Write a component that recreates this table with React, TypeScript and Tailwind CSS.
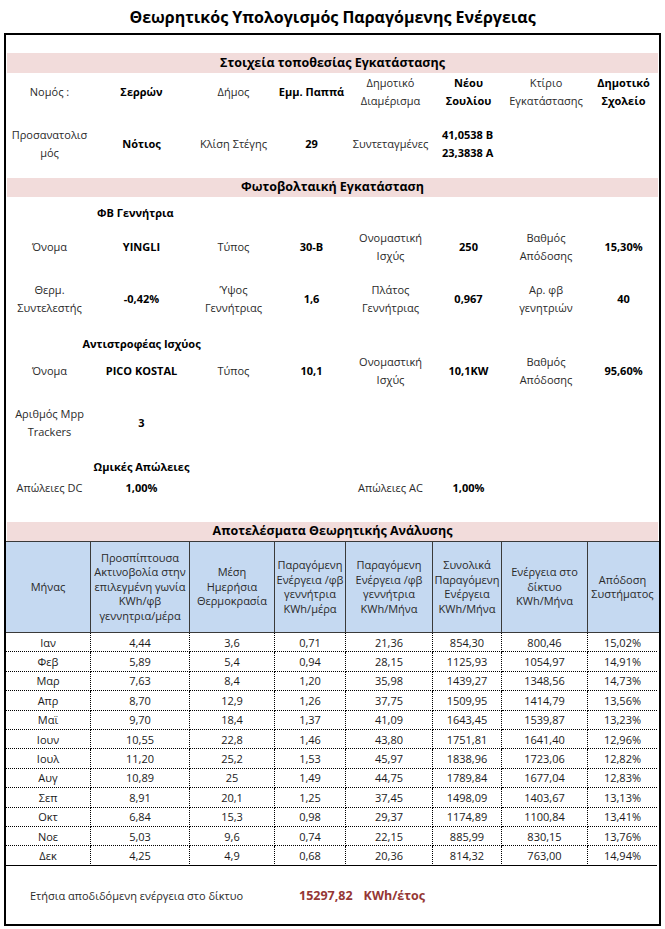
import React from 'react';

const cols = 'grid grid-cols-[85px_99px_85px_71px_87px_69px_86px_69px]';

const months: string[][] = [
  ['Ιαν', '4,44', '3,6', '0,71', '21,36', '854,30', '800,46', '15,02%'],
  ['Φεβ', '5,89', '5,4', '0,94', '28,15', '1125,93', '1054,97', '14,91%'],
  ['Μαρ', '7,63', '8,4', '1,20', '35,98', '1439,27', '1348,56', '14,73%'],
  ['Απρ', '8,70', '12,9', '1,26', '37,75', '1509,95', '1414,79', '13,56%'],
  ['Μαϊ', '9,70', '18,4', '1,37', '41,09', '1643,45', '1539,87', '13,23%'],
  ['Ιουν', '10,55', '22,8', '1,46', '43,80', '1751,81', '1641,40', '12,96%'],
  ['Ιουλ', '11,20', '25,2', '1,53', '45,97', '1838,96', '1723,06', '12,82%'],
  ['Αυγ', '10,89', '25', '1,49', '44,75', '1789,84', '1677,04', '12,83%'],
  ['Σεπ', '8,91', '20,1', '1,25', '37,45', '1498,09', '1403,67', '13,13%'],
  ['Οκτ', '6,84', '15,3', '0,98', '29,37', '1174,89', '1100,84', '13,41%'],
  ['Νοε', '5,03', '9,6', '0,74', '22,15', '885,99', '830,15', '13,76%'],
  ['Δεκ', '4,25', '4,9', '0,68', '20,36', '814,32', '763,00', '14,94%'],
];

const headers: React.ReactNode[] = [
  <>Μήνας</>,
  <>Προσπίπτουσα<br />Ακτινοβολία στην<br />επιλεγμένη γωνία<br />KWh/φβ<br />γεννητρια/μέρα</>,
  <>Μέση<br />Ημερήσια<br />Θερμοκρασία</>,
  <>Παραγόμενη<br />Ενέργεια /φβ<br />γεννήτρια<br />KWh/μέρα</>,
  <>Παραγόμενη<br />Ενέργεια /φβ<br />γεννήτρια<br />KWh/Μήνα</>,
  <>Συνολικά<br />Παραγόμενη<br />Ενέργεια<br />KWh/Μήνα</>,
  <>Ενέργεια στο<br />δίκτυο<br />KWh/Μήνα</>,
  <>Απόδοση<br />Συστήματος</>,
];

const Band = ({ title, h }: { title: string; h: string }) => (
  <div className={`mx-px flex items-center justify-center bg-[#f2dcdb] text-[12.5px] font-bold text-black ${h}`}>
    {title}
  </div>
);

const L = ({ children }: { children?: React.ReactNode }) => (
  <div className="flex items-center justify-center text-center leading-[18px] text-[#2a2a2a]">{children}</div>
);

const V = ({ children }: { children?: React.ReactNode }) => (
  <div className="flex items-center justify-center whitespace-nowrap text-center font-bold leading-[18px] text-black">
    {children}
  </div>
);

const Empty = () => <div />;

export default function App() {
  return (
    <div className="h-[929px] w-[665px] bg-white font-['Open_Sans',sans-serif] text-[11px]">
      <div className="flex h-[33px] items-center justify-center text-[16px] font-bold text-black">
        Θεωρητικός Υπολογισμός Παραγόμενης Ενέργειας
      </div>

      <div className="ml-[4px] flex h-[893px] w-[657px] flex-col border-2 border-black">
        <div className="h-[18px]" />
        <Band title="Στοιχεία τοποθεσίας Εγκατάστασης" h="h-[20px]" />

        <div className={`${cols} mx-px h-[37px]`}>
          <L>Νομός :</L>
          <V>Σερρών</V>
          <L>Δήμος</L>
          <V>Εμμ. Παππά</V>
          <L>Δημοτικό<br />Διαμέρισμα</L>
          <V>Νέου<br />Σουλίου</V>
          <L>Κτίριο<br />Εγκατάστασης</L>
          <V>Δημοτικό<br />Σχολείο</V>
        </div>

        <div className={`${cols} mx-px h-[68px]`}>
          <L>Προσανατολισ<br />μός</L>
          <V>Νότιος</V>
          <L>Κλίση Στέγης</L>
          <V>29</V>
          <L>Συντεταγμένες</L>
          <div className="flex flex-col justify-center whitespace-nowrap pl-[8px] font-bold leading-[18px] text-black">
            <span>41,0538 Β</span>
            <span>23,3838 Α</span>
          </div>
          <Empty />
          <Empty />
        </div>

        <Band title="Φωτοβολταική Εγκατάσταση" h="h-[19px]" />

        <div className={`${cols} mx-px h-[32px]`}>
          <Empty />
          <div className="flex items-center pl-[5px] font-bold text-black">ΦΒ Γεννήτρια</div>
        </div>

        <div className={`${cols} mx-px h-[34px]`}>
          <L>Όνομα</L>
          <V>YINGLI</V>
          <L>Τύπος</L>
          <V>30-B</V>
          <L>Ονομαστική<br />Ισχύς</L>
          <V>250</V>
          <L>Βαθμός<br />Απόδοσης</L>
          <V>15,30%</V>
        </div>

        <div className={`${cols} mx-px h-[72px]`}>
          <L>Θερμ.<br />Συντελεστής</L>
          <V>-0,42%</V>
          <L>Ύψος<br />Γεννήτριας</L>
          <V>1,6</V>
          <L>Πλάτος<br />Γεννήτριας</L>
          <V>0,967</V>
          <L>Αρ. φβ<br />γενητριών</L>
          <V>40</V>
        </div>

        <div className={`${cols} mx-px h-[16px]`}>
          <Empty />
          <V>Αντιστροφέας Ισχύος</V>
        </div>

        <div className={`${cols} mx-px h-[40px]`}>
          <L>Όνομα</L>
          <V>PICO KOSTAL</V>
          <L>Τύπος</L>
          <V>10,1</V>
          <L>Ονομαστική<br />Ισχύς</L>
          <V>10,1KW</V>
          <L>Βαθμός<br />Απόδοσης</L>
          <V>95,60%</V>
        </div>

        <div className={`${cols} mx-px h-[64px]`}>
          <L>Αριθμός Mpp<br />Trackers</L>
          <V>3</V>
        </div>

        <div className={`${cols} mx-px h-[24px]`}>
          <Empty />
          <V>Ωμικές Απώλειες</V>
        </div>

        <div className={`${cols} mx-px h-[18px]`}>
          <L>Απώλειες DC</L>
          <V>1,00%</V>
          <Empty />
          <Empty />
          <L>Απώλειες AC</L>
          <V>1,00%</V>
        </div>

        <div className="h-[25px]" />
        <Band title="Αποτελέσματα Θεωρητικής Ανάλυσης" h="h-[19px]" />

        {/* table */}
        <div className={`${cols} h-[92px] border-y border-[#3a3a3a] bg-[#c5d9f1]`}>
          {headers.map((h, i) => (
            <div
              key={i}
              className={`flex items-center justify-center text-center leading-[14.5px] text-[#2a2a2a] ${
                i < 7 ? 'border-r border-[#3a3a3a]' : ''
              }`}
            >
              <span>{h}</span>
            </div>
          ))}
        </div>

        {months.map((row, r) => (
          <div key={row[0]} className={`${cols} h-[19.4px]`}>
            {row.map((v, c) => (
              <div
                key={c}
                className={`flex items-center justify-center border-b border-dotted border-black leading-none text-[#1a1a1a] ${
                  c < 7 ? 'border-r' : ''
                } ${r === months.length - 1 ? '[border-bottom-style:solid]' : ''}`}
              >
                {v}
              </div>
            ))}
          </div>
        ))}

        <div className="flex h-[58px] items-center pl-[24px] pt-[4px]">
          <span className="w-[269px] text-[#2a2a2a]">Ετήσια αποδιδόμενη ενέργεια στο δίκτυο</span>
          <span className="whitespace-nowrap text-[12.5px] font-bold text-[#953735]">15297,82</span>
          <span className="ml-[11px] whitespace-nowrap text-[12.5px] font-bold text-[#953735]">KWh/έτος</span>
        </div>
      </div>
    </div>
  );
}
